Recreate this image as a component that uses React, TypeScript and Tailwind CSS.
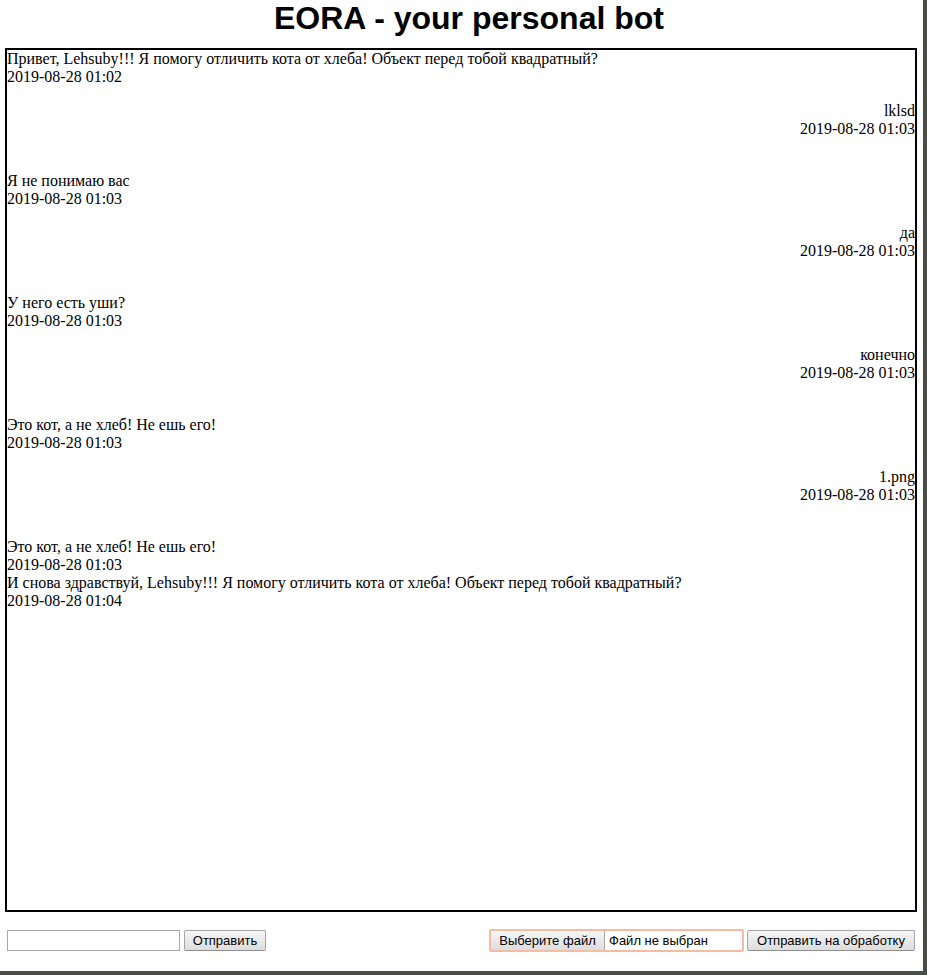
import { useState } from "react";

type Message = { author: "bot" | "user"; text: string; time: string };

const messages: Message[] = [
  { author: "bot", text: "Привет, Lehsuby!!! Я помогу отличить кота от хлеба! Объект перед тобой квадратный?", time: "2019-08-28 01:02" },
  { author: "user", text: "lklsd", time: "2019-08-28 01:03" },
  { author: "bot", text: "Я не понимаю вас", time: "2019-08-28 01:03" },
  { author: "user", text: "да", time: "2019-08-28 01:03" },
  { author: "bot", text: "У него есть уши?", time: "2019-08-28 01:03" },
  { author: "user", text: "конечно", time: "2019-08-28 01:03" },
  { author: "bot", text: "Это кот, а не хлеб! Не ешь его!", time: "2019-08-28 01:03" },
  { author: "user", text: "1.png", time: "2019-08-28 01:03" },
  { author: "bot", text: "Это кот, а не хлеб! Не ешь его!", time: "2019-08-28 01:03" },
  { author: "bot", text: "И снова здравствуй, Lehsuby!!! Я помогу отличить кота от хлеба! Объект перед тобой квадратный?", time: "2019-08-28 01:04" },
];

const buttonClass =
  "h-[21px] shrink-0 whitespace-nowrap rounded-[2px] border border-[#a6a6a6] border-b-[#8f8f8f] bg-linear-to-b from-[#f6f6f6] to-[#dddddd] text-center leading-[19px]";

function ChatMessage({ message }: { message: Message }) {
  const side = message.author === "user" ? "mt-4 mb-[34px] text-right" : "text-left";
  return (
    <li className={side}>
      <p>{message.text}</p>
      <p>{message.time}</p>
    </li>
  );
}

export default function App() {
  const [text, setText] = useState("");
  const [fileName, setFileName] = useState("");

  return (
    <div className="flex min-h-screen flex-col border-r-4 border-b-4 border-[#4b4e46] bg-white text-black">
      <h1 className="h-12 pl-[15px] text-center font-['Liberation_Sans',Arial,sans-serif] text-[32px] leading-[36px] font-bold">
        EORA - your personal bot
      </h1>

      <main className="mr-1.5 ml-[5px] flex-1 border-2 border-black font-['Liberation_Serif','Times_New_Roman',serif] text-base leading-[18px]">
        <ul>
          {messages.map((message, index) => (
            <ChatMessage key={index} message={message} />
          ))}
        </ul>
      </main>

      <footer className="flex flex-wrap justify-between gap-y-2 pt-[18px] pr-2 pb-5 pl-[7px] font-['Liberation_Sans',Arial,sans-serif] text-[13px]">
        <form className="flex gap-1" onSubmit={(event) => event.preventDefault()}>
          <input
            type="text"
            aria-label="Сообщение"
            value={text}
            onChange={(event) => setText(event.target.value)}
            className="h-[21px] w-[173px] border border-[#a9a9a9] bg-white px-0.5"
          />
          <button type="submit" className={`${buttonClass} w-[82px]`}>Отправить</button>
        </form>

        <form className="flex gap-1" onSubmit={(event) => event.preventDefault()}>
          <label className="relative flex h-[21px] w-[253px] cursor-pointer rounded-[1px] outline-2 -outline-offset-1 outline-[#f6bca2]">
            <input
              type="file"
              className="sr-only"
              onChange={(event) => setFileName(event.target.files?.[0]?.name ?? "")}
            />
            <span className="h-[21px] w-[115px] shrink-0 border border-[#d08e76] border-r-[#a6a6a6] bg-linear-to-b from-[#f6f6f6] to-[#dddddd] text-center leading-[19px]">
              Выберите файл
            </span>
            <span className="truncate pl-1 leading-[21px]">{fileName || "Файл не выбран"}</span>
          </label>
          <button type="submit" className={`${buttonClass} w-[168px]`}>Отправить на обработку</button>
        </form>
      </footer>
    </div>
  );
}
